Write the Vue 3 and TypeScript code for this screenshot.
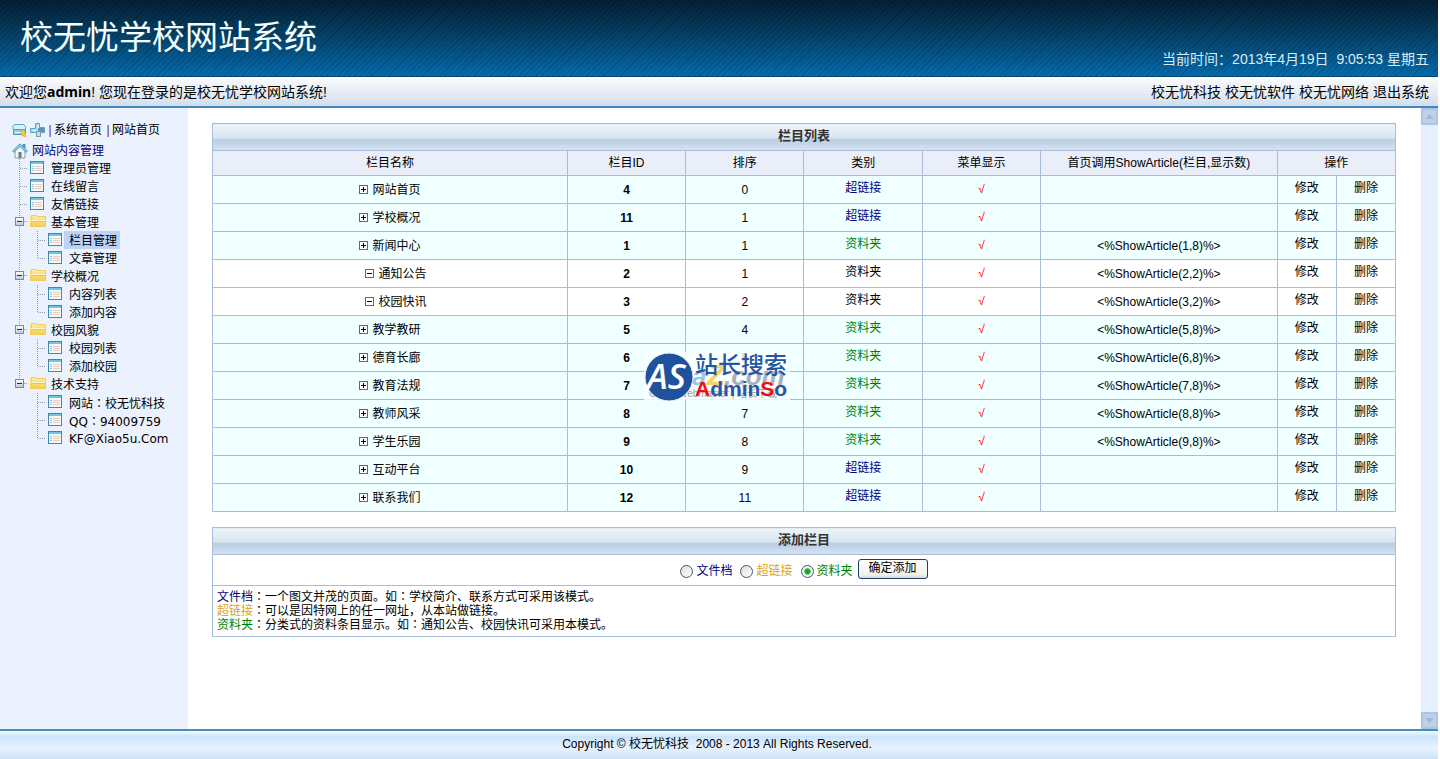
<script setup lang="ts">
import { ref } from 'vue'

interface Leaf { label: string; latin?: boolean }
interface Group { label: string; children: Leaf[] }
interface Column {
  name: string
  id: number
  order: number
  kind: 'link' | 'folder'
  call?: string
  child?: boolean
}

const pages: string[] = ['管理员管理', '在线留言', '友情链接']

const groups: Group[] = [
  { label: '基本管理', children: [{ label: '栏目管理' }, { label: '文章管理' }] },
  { label: '学校概况', children: [{ label: '内容列表' }, { label: '添加内容' }] },
  { label: '校园风貌', children: [{ label: '校园列表' }, { label: '添加校园' }] },
  {
    label: '技术支持',
    children: [
      { label: '网站：校无忧科技' },
      { label: 'QQ：94009759', latin: true },
      { label: 'KF@Xiao5u.Com', latin: true },
    ],
  },
]

const active = ref('栏目管理')

const columns: Column[] = [
  { name: '网站首页', id: 4, order: 0, kind: 'link' },
  { name: '学校概况', id: 11, order: 1, kind: 'link' },
  { name: '新闻中心', id: 1, order: 1, kind: 'folder', call: '1,8' },
  { name: '通知公告', id: 2, order: 1, kind: 'folder', call: '2,2', child: true },
  { name: '校园快讯', id: 3, order: 2, kind: 'folder', call: '3,2', child: true },
  { name: '教学教研', id: 5, order: 4, kind: 'folder', call: '5,8' },
  { name: '德育长廊', id: 6, order: 5, kind: 'folder', call: '6,8' },
  { name: '教育法规', id: 7, order: 6, kind: 'folder', call: '7,8' },
  { name: '教师风采', id: 8, order: 7, kind: 'folder', call: '8,8' },
  { name: '学生乐园', id: 9, order: 8, kind: 'folder', call: '9,8' },
  { name: '互动平台', id: 10, order: 9, kind: 'link' },
  { name: '联系我们', id: 12, order: 11, kind: 'link' },
]

const kinds = [
  { value: 'article', label: '文件档', note: '一个图文并茂的页面。如：学校简介、联系方式可采用该模式。' },
  { value: 'link', label: '超链接', note: '可以是因特网上的任一网址，从本站做链接。' },
  { value: 'folder', label: '资料夹', note: '分类式的资料条目显示。如：通知公告、校园快讯可采用本模式。' },
]
const picked = ref('folder')

const topLinks: string[] = ['校无忧科技', '校无忧软件', '校无忧网络', '退出系统']
</script>

<template>
  <div class="page">
    <svg class="defs" width="0" height="0" aria-hidden="true">
      <defs>
        <linearGradient id="gold" x1="0" y1="0" x2="0" y2="1">
          <stop offset="0" stop-color="#fff0a0" /><stop offset="1" stop-color="#f6cc48" />
        </linearGradient>
        <linearGradient id="steel" x1="0" y1="0" x2="0" y2="1">
          <stop offset="0" stop-color="#ffffff" /><stop offset="1" stop-color="#b9c6da" />
        </linearGradient>
        <symbol id="i-list" viewBox="0 0 18 18">
          <rect x="3" y="3" width="13" height="12" fill="#f4fafc" stroke="none" />
          <rect x="2.5" y="2.5" width="13" height="12" fill="none" stroke="#3b8ba6" />
          <rect x="3" y="3" width="12" height="2" fill="#6dc6e4" />
          <path d="M4 7.5h2M4 9.5h2M4 11.5h2" stroke="#a9bcd2" />
          <path d="M7 7.5h7M7 9.5h7M7 11.5h7" stroke="#e3cdc4" />
        </symbol>
        <symbol id="i-folder" viewBox="0 0 18 18">
          <path d="M2 2h7l1 1h8v11H2z" fill="url(#gold)" />
          <path d="M3.500 13.500V2.500h5l1 1h8v10z" fill="none" stroke="#efcc66" />
          <path d="M3 7.500h14" stroke="#fff8d0" />
          <path d="M3 8.500h14" stroke="#f2c04a" />
        </symbol>
        <symbol id="i-minus" viewBox="0 0 18 18">
          <rect x="5.5" y="4.500" width="8" height="8" fill="url(#steel)" stroke="#7688a4" />
          <path d="M7 8.500h5" stroke="#203050" />
        </symbol>
      </defs>
    </svg>

    <header class="banner">
      <h1>校无忧学校网站系统</h1>
      <p class="clock">当前时间：2013年4月19日&nbsp; 9:05:53 星期五</p>
    </header>

    <div class="bar">
      <p>欢迎您<b>admin</b>! 您现在登录的是校无忧学校网站系统!</p>
      <nav><a v-for="l in topLinks" :key="l" href="#">{{ l }}</a></nav>
    </div>

    <div class="body">
      <aside>
        <div class="tools">
          <svg width="16" height="16" viewBox="0 0 16 16">
            <path d="M2.500 2.500h9l2 2v3H1V4z" fill="#d9f1fa" stroke="#58a8c8" />
            <path d="M1.500 7.500h12v5h-12z" fill="#8fcbe4" stroke="#4a9cc0" />
            <path d="M3 10.500h8" stroke="#fff" />
            <path d="M10 7l3 3 1 5-4-1.500-1-3z" fill="#f4cf3e" stroke="#cfa428" stroke-width=".6" />
          </svg>
          <svg width="16" height="16" viewBox="0 0 16 16">
            <path d="M5.500 1.500h4v4h5v5h-4v4h-4v-4h-6v-4h5z" fill="#a3d9f2" stroke="#5ba6c8" />
            <path d="M8 3v5M3 8.500h3" stroke="#e8f8ff" stroke-width="1.500" />
            <rect x="8" y="6" width="6" height="4" fill="#6f8fae" />
            <path d="M6.500 9.500h4v5h-4z" fill="#c9dce4" stroke="#7ba0b0" />
          </svg>
          <i>|</i><a href="#">系统首页</a><i>|</i><a href="#">网站首页</a>
        </div>
        <a class="root" href="#">
          <svg width="16" height="16" viewBox="0 0 16 16">
            <path d="M3 8v7h10V8L8 3z" fill="#f3f6f7" stroke="#8a9aa4" />
            <path d="M11 1.500h2V5l-2-2z" fill="#7ab4cc" stroke="#4689a6" />
            <path d="M0.500 8L8 .8 15.500 8l-1.300 1.300L8 3.600 1.800 9.300z" fill="#8fd4ec" stroke="#3f93b4" stroke-width=".9" />
            <rect x="6.500" y="9" width="3" height="6" fill="#6c7c84" />
          </svg>
          <span>网站内容管理</span>
        </a>
        <ul class="tree">
          <li v-for="p in pages" :key="p">
            <a class="node" href="#">
              <svg class="cell"><path class="dots" d="M9.500 0v18M10 9.500h9" /></svg>
              <svg class="cell"><use href="#i-list" /></svg>
              <span class="label">{{ p }}</span>
            </a>
          </li>
          <li v-for="(g, gi) in groups" :key="g.label">
            <a class="node" href="#">
              <svg class="cell">
                <path class="dots" :d="gi < groups.length - 1 ? 'M9.500 0v18M10 8.500h9' : 'M9.500 0v8M10 8.500h9'" />
                <use href="#i-minus" />
              </svg>
              <svg class="cell"><use href="#i-folder" /></svg>
              <span class="label">{{ g.label }}</span>
            </a>
            <ul>
              <li v-for="(c, ci) in g.children" :key="c.label">
                <a class="node" href="#" @click.prevent="active = c.label">
                  <svg class="cell"><path v-if="gi < groups.length - 1" class="dots" d="M9.500 0v18" /></svg>
                  <svg class="cell">
                    <path class="dots" :d="ci < g.children.length - 1 ? 'M9.500 0v18M10 9.500h9' : 'M9.500 0v9M10 9.500h9'" />
                  </svg>
                  <svg class="cell"><use href="#i-list" /></svg>
                  <span class="label" :class="{ on: active === c.label, latin: c.latin }">
                    <template v-for="(part, pi) in c.label.split('：')" :key="pi"><span v-if="pi" class="colon">：</span>{{ part }}</template>
                  </span>
                </a>
              </li>
            </ul>
          </li>
        </ul>
      </aside>

      <main>
        <table class="grid">
          <colgroup>
            <col class="w30"><col class="w10"><col class="w10"><col class="w10"><col class="w10"><col class="w20"><col class="w5"><col class="w5">
          </colgroup>
          <thead>
            <tr class="caption"><th colspan="8">栏目列表</th></tr>
            <tr class="heads">
              <th>栏目名称</th><th>栏目ID</th><th>排序</th><th>类别</th><th>菜单显示</th>
              <th>首页调用ShowArticle(栏目,显示数)</th>
              <th colspan="2">操作</th>
            </tr>
          </thead>
          <tbody>
            <tr v-for="c in columns" :key="c.id" :class="{ child: c.child }">
              <td class="name">
                <svg width="9" height="9" viewBox="0 0 9 9">
                  <rect x=".5" y=".5" width="8" height="8" fill="#fff" stroke="#666" />
                  <path :d="c.child ? 'M2 4.500h5' : 'M2 4.500h5M4.500 2v5'" stroke="#000" />
                </svg>
                <span>{{ c.name }}</span>
              </td>
              <td><b>{{ c.id }}</b></td>
              <td>{{ c.order }}</td>
              <td class="high"><span :class="c.child ? '' : c.kind === 'link' ? 'navy' : 'green'">{{ c.kind === 'link' ? '超链接' : '资料夹' }}</span></td>
              <td class="red">√</td>
              <td><template v-if="c.call">&lt;%ShowArticle({{ c.call }})%&gt;</template></td>
              <td class="high"><a href="#">修改</a></td>
              <td class="high"><a href="#">删除</a></td>
            </tr>
          </tbody>
        </table>

        <form @submit.prevent>
          <table class="grid">
            <thead><tr class="caption"><th>添加栏目</th></tr></thead>
            <tbody>
              <tr class="child">
                <td class="choose">
                  <div class="choices">
                    <label v-for="k in kinds" :key="k.value" :class="k.value">
                      <input v-model="picked" type="radio" name="kind" :value="k.value">{{ k.label }}
                    </label>
                    <button type="submit">确定添加</button>
                  </div>
                </td>
              </tr>
              <tr class="child">
                <td class="notes">
                  <p v-for="k in kinds" :key="k.value">
                    <span :class="k.value">{{ k.label }}</span><template v-for="(part, pi) in ('：' + k.note).split('：')" :key="pi"><span v-if="pi" class="colon">：</span>{{ part }}</template>
                  </p>
                </td>
              </tr>
            </tbody>
          </table>
        </form>
      </main>

      <div class="scroll">
        <button type="button" aria-label="向上滚动"><svg width="9" height="5"><path d="M0 5L4.500 0 9 5z" /></svg></button>
        <button type="button" aria-label="向下滚动"><svg width="9" height="5"><path d="M0 0h9L4.500 5z" /></svg></button>
      </div>
    </div>

    <footer>Copyright © 校无忧科技&nbsp; 2008 - 2013 All Rights Reserved.</footer>

    <svg class="mark" width="150" height="52" viewBox="0 0 150 52">
      <rect x="2" y="2" width="146" height="48" fill="#fbfefe" opacity=".8" />
      <g class="brand">
        <text x="50" y="35" font-size="26" fill="#9cc3ea">a</text>
        <text x="65" y="35" font-size="30" fill="#f2d566">Z</text>
        <text x="82" y="35" font-size="26" fill="#a9b0ba">.com</text>
      </g>
      <text class="cjk" x="7" y="47" font-size="10" fill="#9aa0a8">China Webmaster | 站长下载</text>
      <circle cx="27" cy="27" r="24" fill="#1f519d" stroke="#eaf4fb" />
      <text class="as" x="5" y="39" font-size="35" fill="#fff">AS</text>
      <text class="cjk title" x="53" y="23" font-size="23" fill="#2355a2">站长搜索</text>
      <text class="so" x="53" y="46" font-size="21" fill="#2458a6"><tspan fill="#ee1010">A</tspan>dmin<tspan fill="#ee1010">S</tspan>o</text>
    </svg>
  </div>
</template>

<style>
html, body { margin: 0; background: #fff; }
</style>

<style scoped>
.page {
  position: relative;
  display: flex;
  flex-direction: column;
  min-height: 100vh;
  box-sizing: border-box;
  padding-right: 2px;
  font: 12px/14px "Liberation Sans", "Noto Sans CJK SC", sans-serif;
  color: #000;
}
.defs { position: absolute; }
h1, p, ul { margin: 0; padding: 0; font-weight: normal; }
ul { list-style: none; }
a { color: inherit; text-decoration: none; }

.banner {
  display: flex;
  justify-content: space-between;
  align-items: flex-end;
  box-sizing: border-box;
  height: 77px;
  padding: 0 9px 9px 20px;
  border-bottom: 1px solid #0b4468;
  background:
    repeating-linear-gradient(135deg, rgba(0, 10, 20, .12) 0 1px, rgba(255, 255, 255, .02) 1px 4px),
    linear-gradient(#001c31, #01385b 40%, #0068aa);
}
h1 { font-size: 33px; line-height: 36px; padding-bottom: 11px; color: #f4ffff; }
.clock { font-size: 14px; line-height: 16px; color: #d9eef2; }

.bar {
  display: flex;
  justify-content: space-between;
  align-items: center;
  box-sizing: border-box;
  height: 31px;
  padding: 0 9px 0 5px;
  border-bottom: 2px solid #4088c0;
  background: linear-gradient(#fbfcfd, #d3deeb);
  font-size: 14px;
}
.bar b { font-family: "Noto Sans", sans-serif; }
.bar nav { display: flex; gap: 4px; }

.body { display: flex; flex: 1; }
aside { flex: 0 0 188px; box-sizing: border-box; padding: 13px 0 0 10px; background: #ebf2fe; }
.tools { display: flex; align-items: center; height: 18px; padding-left: 2px; }
.tools svg + svg { margin-left: 2px; }
.tools i { width: 8px; text-align: center; font-style: normal; color: #702058; }
.tools a { padding-right: 2px; }
.root { display: flex; align-items: center; gap: 4px; height: 20px; padding: 0 0 0 2px; margin-top: 2px; color: #000080; }
.tree { margin-top: -2px; }
.node { display: flex; height: 18px; line-height: 18px; }
.cell { flex: none; width: 18px; height: 18px; }
.dots { fill: none; stroke: #8a98ac; stroke-dasharray: 1 1; }
.label { box-sizing: border-box; height: 18px; padding: 1px 3px 0 5px; white-space: nowrap; }
.label.on { background: #bcd3f6; }
.label.latin { font-family: "DejaVu Sans", "Noto Sans CJK SC", sans-serif; }
.colon { font-family: "Noto Sans CJK JP", sans-serif; }

main { flex: 1; min-width: 0; padding: 15px 25px 0 24px; background: #fff; }
.grid { width: 100%; table-layout: fixed; border-collapse: collapse; }
form { margin-top: 15px; }
.w30 { width: 30%; }
.w20 { width: 20%; }
.w10 { width: 10%; }
.w5 { width: 5%; }
th, td { box-sizing: border-box; padding: 0; border: 1px solid #a8bddb; text-align: center; font-weight: normal; }
td { height: 28px; background: #f0ffff; }
.child td { background: #fff; }
.caption th {
  height: 27px;
  padding-bottom: 2px;
  font-size: 13px;
  font-weight: bold;
  color: #333;
  background: linear-gradient(#eef4f8, #d8e5f1 52%, #b8cce3 58%, #c6d6e9 75%, #d8e2f1);
}
.heads th { height: 25px; background: #e9eef8; }
.name { padding-top: 1px; }
.name svg { margin-right: 4px; }
.child .name { padding-left: 12px; }
.high { padding-bottom: 3px; }
.navy, .article { color: #000080; }
.green, .folder { color: #008000; }
.link { color: #daa520; }
.red { padding-bottom: 2px; color: #f00; }

.child .choose { height: 31px; }
.choices { display: flex; justify-content: center; align-items: center; }
.choices label { display: flex; align-items: center; gap: 3px; margin-right: 8px; padding-top: 2px; }
.choices label:last-of-type { margin-right: 5px; }
input {
  appearance: none;
  box-sizing: border-box;
  width: 13px;
  height: 13px;
  margin: 0;
  border: 1px solid #3b5a80;
  border-radius: 50%;
  background: linear-gradient(135deg, #dcdcd7, #fff);
}
input:checked { background: radial-gradient(circle, #1fa01f 0 2px, #6fcf6f 3px, #f4f6f4 4px); }
.choices button {
  box-sizing: border-box;
  width: 70px;
  height: 20px;
  margin-bottom: 2px;
  padding: 0 0 3px;
  border: 1px solid #17406f;
  border-radius: 3px;
  background: linear-gradient(#fff, #f2f1ec 80%, #dcd8cc);
  font: inherit;
  color: #000;
}
.child .notes { padding: 3px 4px 5px; text-align: left; }
.notes p { height: 14px; }

.scroll { display: flex; flex: 0 0 17px; flex-direction: column; justify-content: space-between; background: #e6f0fd; }
.scroll button {
  display: flex;
  align-items: center;
  justify-content: center;
  height: 17px;
  padding: 0;
  border: 2px solid #abc6e4;
  background: #bdd2ea;
}
.scroll path { fill: #a3bad6; }

footer {
  box-sizing: border-box;
  height: 30px;
  padding: 6px 4px 0 0;
  overflow: hidden;
  border-top: 2px solid #4a8cb4;
  background: linear-gradient(#f0fcff, #cbe4fc 20%, #e8f2fe 60%, #cbe2fb);
  text-align: center;
}

.mark { position: absolute; top: 350px; left: 50%; margin-left: -78px; }
.brand { font-family: "Liberation Sans", sans-serif; font-style: italic; font-weight: bold; }
.mark .as { font-family: "Open Sans", sans-serif; font-style: italic; font-weight: 600; }
.mark .so { font-family: "Liberation Sans", sans-serif; font-weight: bold; }
.mark .title { font-weight: 500; }
.mark .cjk { font-family: "Liberation Sans", "Noto Sans CJK SC", sans-serif; }
</style>
